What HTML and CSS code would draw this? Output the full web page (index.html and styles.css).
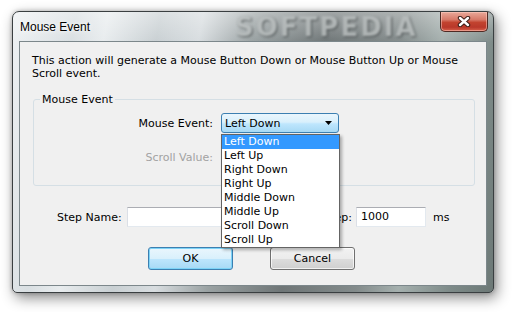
FILE: index.html
```html
<!DOCTYPE html>
<html>
<head>
<meta charset="utf-8">
<link rel="stylesheet" href="styles.css">
</head>
<body>
<div class="window">
  <div class="titlebar">
    <span class="title">Mouse Event</span>
    <span class="watermark">SOFTPEDIA</span>
    <div class="close">
      <svg width="14" height="11" viewBox="0 0 14 11">
        <path d="M3 2 L11 9 M11 2 L3 9" stroke="#3b1e18" stroke-width="4.4" stroke-linecap="round"/>
        <path d="M3 2 L11 9 M11 2 L3 9" stroke="#ffffff" stroke-width="2.4" stroke-linecap="round"/>
      </svg>
    </div>
  </div>
  <div class="client">
    <p class="intro">This action will generate a Mouse Button Down or Mouse Button Up or Mouse<br>Scroll event.</p>
    <div class="group">
      <span class="group-title">Mouse Event</span>
      <div class="group-grid">
        <span class="lbl">Mouse Event:</span>
        <div class="combo-wrap">
          <div class="combo">
            <span>Left Down</span>
            <svg class="arrow" width="7" height="4" viewBox="0 0 7 4"><path d="M0 0 H7 L3.5 4 Z" fill="#000"/></svg>
          </div>
          <ul class="list">
            <li class="sel">Left Down</li>
            <li>Left Up</li>
            <li>Right Down</li>
            <li>Right Up</li>
            <li>Middle Down</li>
            <li>Middle Up</li>
            <li>Scroll Down</li>
            <li>Scroll Up</li>
          </ul>
        </div>
        <span class="lbl disabled">Scroll Value:</span>
        <div class="field field-disabled"></div>
      </div>
    </div>
    <div class="step-row">
      <span class="step-lbl">Step Name:</span>
      <div class="field step-name"></div>
      <span class="delay-lbl">Delay after step:</span>
      <div class="field delay">1000</div>
      <span class="ms">ms</span>
    </div>
    <div class="buttons">
      <div class="btn btn-default">OK</div>
      <div class="btn">Cancel</div>
    </div>
  </div>
</div>
</body>
</html>
```

FILE: styles.css
```css
* { box-sizing: border-box; }
html, body { margin: 0; padding: 0; background: #ffffff; }
body {
  width: 515px;
  height: 312px;
  overflow: hidden;
  font-family: "DejaVu Sans", sans-serif;
  font-size: 11px;
  color: #000;
}
.window {
  margin: 11px 0 0 12px;
  width: 482px;
  height: 282px;
  border: 1px solid #3a3f41;
  border-radius: 7px 7px 5px 5px;
  padding: 0 6px 6px 6px;
  display: flex;
  flex-direction: column;
  background:
    linear-gradient(to bottom, rgba(255,255,255,0.35), rgba(255,255,255,0) 30px),
    linear-gradient(100deg, #eef1f3 0%, #d9dfe2 12%, #e8ecee 18%, #c9d0d3 28%, #d8dde0 36%, #9aa2a3 46%, #6f7677 60%, #838b8b 74%, #a5b0ae 82%, #7d8a88 92%, #6c7876 100%);
  box-shadow: 3px 5px 14px rgba(0,0,0,0.45), 0 0 4px rgba(0,0,0,0.25);
}
.titlebar {
  position: relative;
  height: 29px;
  display: flex;
  align-items: flex-start;
}
.title {
  font-family: "Liberation Sans", sans-serif;
  font-size: 12px;
  line-height: 14px;
  margin-top: 8px;
  margin-left: 1px;
  color: #000;
  text-shadow: 0 0 6px rgba(255,255,255,0.9), 0 0 3px rgba(255,255,255,0.9);
}
.watermark {
  position: absolute;
  left: 216px;
  top: 1px;
  font-family: "DejaVu Sans", sans-serif;
  font-weight: bold;
  font-size: 26px;
  letter-spacing: 2px;
  line-height: 28px;
  color: #b9bebe;
  filter: blur(1.3px);
  text-shadow: 1px 1px 2px #3a3f40;
  opacity: 0.8;
}
.close {
  margin-left: auto;
  margin-right: -1px;
  width: 48px;
  height: 20px;
  border: 1px solid #4f2a24;
  border-top: none;
  border-radius: 0 0 5px 5px;
  background: linear-gradient(to bottom, #e9a99a 0%, #d77a69 40%, #c2432f 55%, #b9382a 80%, #d8624c 100%);
  box-shadow: inset 0 0 0 1px rgba(255,210,200,0.5);
  display: flex;
  align-items: center;
  justify-content: center;
  position: relative;
  z-index: 1;
}
.client {
  flex: 1;
  border: 1px solid #7c878b;
  background: #f0f0f0;
  position: relative;
}
.intro {
  margin: 0;
  padding: 12px 0 0 12px;
  line-height: 13px;
}
.group {
  margin: 19px 11px 0 13px;
  height: 87px;
  border: 1px solid #d5dfe5;
  border-radius: 3px;
}
.group-title {
  display: block;
  width: fit-content;
  margin: -7px 0 0 6px;
  padding: 0 2px;
  line-height: 13px;
  background: #f0f0f0;
  color: #000;
}
.group-grid {
  display: grid;
  grid-template-columns: 179px 119px;
  column-gap: 8px;
  row-gap: 14px;
  align-items: center;
  margin-top: 7px;
}
.lbl {
  text-align: right;
  line-height: 13px;
}
.lbl.disabled { color: #a2a2a2; }
.combo-wrap {
  position: relative;
  height: 20px;
}
.combo {
  height: 20px;
  width: 118px;
  border: 1px solid #3c7fb1;
  border-radius: 3px;
  background: linear-gradient(to bottom, #eaf6fd 0%, #d9f0fc 45%, #bee6fd 55%, #a7d9f5 100%);
  display: flex;
  align-items: center;
  padding: 0 0 0 3px;
  line-height: 13px;
}
.combo .arrow { margin-left: auto; margin-right: 6px; }
.list {
  position: absolute;
  left: 0;
  top: 21px;
  width: 119px;
  margin: 0;
  padding: 0;
  list-style: none;
  background: #fff;
  border: 1px solid #646464;
  box-shadow: 2px 2px 3px rgba(0,0,0,0.3);
  z-index: 5;
}
.list li {
  height: 14px;
  line-height: 14px;
  padding-left: 2px;
}
.list li.sel { background: #3399ff; color: #fff; }
.field {
  height: 20px;
  background: #fff;
  border: 1px solid #e3e9ef;
  border-top-color: #abadb3;
  border-left-color: #dbdfe6;
  line-height: 18px;
  padding-left: 4px;
}
.field-disabled { width: 80px; background: #f0f0f0; }
.step-row {
  display: flex;
  align-items: center;
  margin-top: 21px;
  padding-left: 37px;
}
.step-lbl { width: 70px; white-space: nowrap; }
.step-name { width: 125px; }
.delay-lbl { width: 100px; text-align: right; white-space: nowrap; }
.delay { width: 70px; margin-left: 4px; }
.ms { margin-left: 7px; }
.buttons {
  display: flex;
  margin-top: 20px;
  padding-left: 128px;
  gap: 37px;
}
.btn {
  width: 85px;
  height: 23px;
  border: 1px solid #707070;
  border-radius: 3px;
  background: linear-gradient(to bottom, #f2f2f2 0%, #ebebeb 50%, #dddddd 51%, #cfcfcf 100%);
  box-shadow: inset 0 0 0 1px rgba(255,255,255,0.7);
  display: flex;
  align-items: center;
  justify-content: center;
}
.btn-default {
  border-color: #3c7fb1;
  background: linear-gradient(to bottom, #eaf6fd 0%, #d9f0fc 50%, #bee6fd 51%, #a7d9f5 100%);
  box-shadow: inset 0 0 0 1px #7dd3f7;
}
```
